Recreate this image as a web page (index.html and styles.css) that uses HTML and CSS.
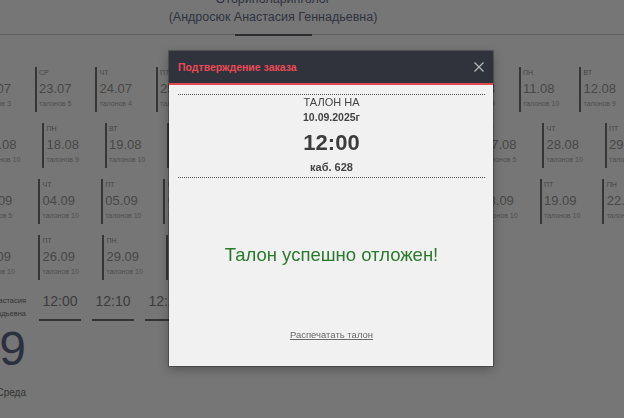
FILE: index.html
```html
<!DOCTYPE html>
<html lang="ru">
<head>
<meta charset="utf-8">
<title>Запись</title>
<link rel="stylesheet" href="styles.css">
</head>
<body>
<div class="page">
  <header class="head">
    <div class="spec">Оториноларинголог</div>
    <div class="doc">(Андросюк Анастасия Геннадьевна)</div>
  </header>
  <nav class="tabbar"><span class="tab"></span></nav>

  <section class="days">
    <div class="row r1">
      <div class="card"><span class="dow">ВТ</span><span class="date">22.07</span><span class="cnt">талонов 3</span></div>
      <div class="card"><span class="dow">СР</span><span class="date">23.07</span><span class="cnt">талонов 5</span></div>
      <div class="card"><span class="dow">ЧТ</span><span class="date">24.07</span><span class="cnt">талонов 4</span></div>
      <div class="card"><span class="dow">ПТ</span><span class="date">25.07</span><span class="cnt">талонов 7</span></div>
      <div class="card"><span class="dow">ПН</span><span class="date">28.07</span><span class="cnt">талонов 6</span></div>
      <div class="card"><span class="dow">ВТ</span><span class="date">29.07</span><span class="cnt">талонов 8</span></div>
      <div class="card"><span class="dow">ЧТ</span><span class="date">31.07</span><span class="cnt">талонов 10</span></div>
      <div class="card"><span class="dow">ПН</span><span class="date">04.08</span><span class="cnt">талонов 9</span></div>
      <div class="card"><span class="dow">ПТ</span><span class="date">08.08</span><span class="cnt">талонов 3</span></div>
      <div class="card"><span class="dow">ПН</span><span class="date">11.08</span><span class="cnt">талонов 10</span></div>
      <div class="card"><span class="dow">ВТ</span><span class="date">12.08</span><span class="cnt">талонов 9</span></div>
    </div>
    <div class="row r2">
      <div class="card"><span class="dow">ПТ</span><span class="date">15.08</span><span class="cnt">талонов 10</span></div>
      <div class="card"><span class="dow">ПН</span><span class="date">18.08</span><span class="cnt">талонов 9</span></div>
      <div class="card"><span class="dow">ВТ</span><span class="date">19.08</span><span class="cnt">талонов 10</span></div>
      <div class="card"><span class="dow">СР</span><span class="date">20.08</span><span class="cnt">талонов 10</span></div>
      <div class="card"><span class="dow">ЧТ</span><span class="date">21.08</span><span class="cnt">талонов 8</span></div>
      <div class="card"><span class="dow">ПТ</span><span class="date">22.08</span><span class="cnt">талонов 10</span></div>
      <div class="card"><span class="dow">ПН</span><span class="date">25.08</span><span class="cnt">талонов 10</span></div>
      <div class="card"><span class="dow">ВТ</span><span class="date">26.08</span><span class="cnt">талонов 7</span></div>
      <div class="card"><span class="dow">СР</span><span class="date">27.08</span><span class="cnt">талонов 5</span></div>
      <div class="card"><span class="dow">ЧТ</span><span class="date">28.08</span><span class="cnt">талонов 10</span></div>
      <div class="card"><span class="dow">ПТ</span><span class="date">29.08</span><span class="cnt">талонов 10</span></div>
    </div>
    <div class="row r3">
      <div class="card"><span class="dow">СР</span><span class="date">03.09</span><span class="cnt">талонов 5</span></div>
      <div class="card"><span class="dow">ЧТ</span><span class="date">04.09</span><span class="cnt">талонов 10</span></div>
      <div class="card"><span class="dow">ПТ</span><span class="date">05.09</span><span class="cnt">талонов 10</span></div>
      <div class="card"><span class="dow">ПН</span><span class="date">08.09</span><span class="cnt">талонов 10</span></div>
      <div class="card"><span class="dow">ВТ</span><span class="date">09.09</span><span class="cnt">талонов 10</span></div>
      <div class="card"><span class="dow">СР</span><span class="date">10.09</span><span class="cnt">талонов 9</span></div>
      <div class="card"><span class="dow">ЧТ</span><span class="date">11.09</span><span class="cnt">талонов 10</span></div>
      <div class="card"><span class="dow">ПН</span><span class="date">15.09</span><span class="cnt">талонов 10</span></div>
      <div class="card"><span class="dow">ЧТ</span><span class="date">18.09</span><span class="cnt">талонов 10</span></div>
      <div class="card"><span class="dow">ПТ</span><span class="date">19.09</span><span class="cnt">талонов 10</span></div>
      <div class="card"><span class="dow">ПН</span><span class="date">22.09</span><span class="cnt">талонов 10</span></div>
    </div>
    <div class="row r4">
      <div class="card"><span class="dow">ЧТ</span><span class="date">25.09</span><span class="cnt">талонов 10</span></div>
      <div class="card"><span class="dow">ПТ</span><span class="date">26.09</span><span class="cnt">талонов 10</span></div>
      <div class="card"><span class="dow">ПН</span><span class="date">29.09</span><span class="cnt">талонов 10</span></div>
      <div class="card"><span class="dow">ВТ</span><span class="date">30.09</span><span class="cnt">талонов 10</span></div>
    </div>
  </section>

  <section class="pick">
    <div class="sel">
      <div class="sel-name">Андросюк Анастасия</div>
      <div class="sel-name">Геннадьевна</div>
      <div class="sel-day">10.09</div>
      <div class="sel-dow">Среда</div>
    </div>
    <div class="slots">
      <span class="slot">12:00</span>
      <span class="slot">12:10</span>
      <span class="slot">12:20</span>
      <span class="slot">12:30</span>
      <span class="slot">12:40</span>
      <span class="slot">12:50</span>
      <span class="slot">13:00</span>
      <span class="slot">13:10</span>
    </div>
  </section>
</div>

<div class="modal">
  <div class="m-head">
    <span class="m-title">Подтверждение заказа</span>
    <svg class="m-close" width="10" height="10" viewBox="0 0 10 10"><path d="M0.5 0.5L9.5 9.5M9.5 0.5L0.5 9.5" stroke="#b4b6ba" stroke-width="1.3" fill="none"/></svg>
  </div>
  <div class="m-body">
    <div class="dots"></div>
    <div class="t-label">ТАЛОН НА</div>
    <div class="t-date">10.09.2025г</div>
    <div class="t-time">12:00</div>
    <div class="t-room">каб. 628</div>
    <div class="dots dots2"></div>
    <div class="msg">Талон успешно отложен!</div>
    <div class="print">Распечатать талон</div>
  </div>
</div>
</body>
</html>
```

FILE: styles.css
```css
* { box-sizing: border-box; }
html, body { margin: 0; }
body {
  width: 624px;
  height: 418px;
  overflow: hidden;
  background: #767676;
  font-family: "Liberation Sans", Arial, sans-serif;
  color: #3a3a3a;
}
.page { display: flex; flex-direction: column; }

.head {
  width: 546px;
  margin-top: -10px;
  text-align: center;
  font-size: 12.5px;
  line-height: 18px;
  color: #30333e;
}
.tabbar {
  display: flex;
  height: 9px;
  border-bottom: 1px solid #5e5e5e;
}
.tab {
  flex: none;
  width: 77px;
  height: 10px;
  margin-left: 235px;
  border-bottom: 2px solid #2c2c30;
}

.days {
  display: flex;
  flex-direction: column;
  gap: 11px;
  margin-top: 32px;
}
.row { display: flex; height: 45px; }
.card {
  flex: none;
  display: flex;
  flex-direction: column;
  height: 45px;
  padding-left: 2.5px;
  border-left: 2px solid #363636;
  white-space: nowrap;
}
.r1 { margin-left: -26px; }
.r1 .card { width: 60.5px; }
.r2 { margin-left: -20.5px; }
.r2 .card { width: 62.5px; }
.r3 { margin-left: -24.7px; }
.r3 .card { width: 62.7px; }
.r4 { margin-left: -26px; }
.r4 .card { width: 64px; }

.dow { font-size: 7px; line-height: 12px; color: #464646; }
.date { font-size: 13px; line-height: 20px; color: #474747; }
.cnt { font-size: 7px; line-height: 10px; color: #4e4e4e; }

.pick {
  display: flex;
  align-items: flex-start;
  margin-top: 10px;
}
.sel {
  flex: none;
  width: 121px;
  margin-left: -95px;
  padding-top: 5px;
  text-align: right;
}
.sel-name { font-size: 7.5px; line-height: 12.5px; color: #333; }
.sel-day {
  margin-top: 3.5px;
  font-size: 48px;
  line-height: 50px;
  color: #2c2f3e;
}
.sel-dow {
  margin-top: 13px;
  font-size: 10px;
  line-height: 12px;
  color: #333;
}
.slots {
  display: flex;
  gap: 11px;
  margin-left: 13px;
  padding-top: 3px;
}
.slot {
  flex: none;
  width: 42px;
  padding-bottom: 9px;
  border-bottom: 2px solid #333;
  text-align: center;
  font-size: 14px;
  line-height: 17px;
  color: #3c3c3c;
}

.modal {
  position: fixed;
  left: 169px;
  top: 51px;
  width: 324px;
  background: #f1f1f1;
  box-shadow: 0 0 0 1px rgba(0,0,0,0.25), 0 3px 10px rgba(0,0,0,0.3);
}
.m-head {
  display: flex;
  align-items: center;
  justify-content: space-between;
  height: 34px;
  padding: 0 9px;
  background: #30333b;
  border-bottom: 2px solid #e5474f;
}
.m-title {
  font-size: 10.5px;
  font-weight: bold;
  color: #ea4a55;
}
.m-close { display: block; }
.m-body {
  padding: 9px 8px 25px 9px;
  text-align: center;
  color: #444;
}
.dots { border-top: 1px dotted #555; }
.dots2 { margin-top: 4px; }
.t-label { font-size: 11px; line-height: 14px; }
.t-date { font-size: 10.5px; line-height: 16px; font-weight: bold; }
.t-time { font-size: 22px; line-height: 36px; font-weight: bold; color: #3c3c3c; }
.t-room { font-size: 11px; line-height: 12px; font-weight: bold; }
.msg {
  margin-top: 65px;
  font-size: 18.5px;
  line-height: 24px;
  color: #2a7a2c;
}
.print {
  margin-top: 62px;
  font-size: 9.5px;
  line-height: 12px;
  color: #6a6a6a;
  text-decoration: underline;
}
```
